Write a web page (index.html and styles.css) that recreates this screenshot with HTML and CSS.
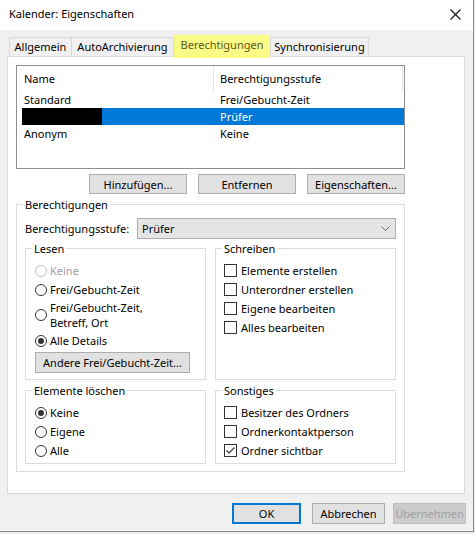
FILE: index.html
```html
<!DOCTYPE html>
<html lang="de">
<head>
    <meta charset="UTF-8">
    <meta name="viewport" content="width=device-width, initial-scale=1.0">
    <title>Kalender: Eigenschaften</title>
    <link rel="stylesheet" href="styles.css">
</head>
<body>
<div class="window">
    <div class="titlebar">
        <span class="title">Kalender: Eigenschaften</span>
        <svg class="close" width="11" height="11" viewBox="0 0 11 11"><path d="M0.5 0.5L10.5 10.5M10.5 0.5L0.5 10.5" stroke="#111" stroke-width="1.1" fill="none"/></svg>
    </div>

    <div class="dialog">
        <div class="tabs">
            <div class="tab tab-general">Allgemein</div>
            <div class="tab tab-archive">AutoArchivierung</div>
            <div class="tab tab-active">Berechtigungen</div>
            <div class="tab tab-sync">Synchronisierung</div>
        </div>

        <div class="panel">
            <!-- Liste der Benutzer -->
            <div class="list">
                <div class="list-head">
                    <div class="col-name">Name</div>
                    <div class="col-level">Berechtigungsstufe</div>
                </div>
                <div class="list-row">
                    <div class="cell-name">Standard</div>
                    <div class="cell-level">Frei/Gebucht-Zeit</div>
                </div>
                <div class="list-row selected">
                    <div class="cell-name"><span class="redacted"></span></div>
                    <div class="cell-level">Prüfer</div>
                </div>
                <div class="list-row">
                    <div class="cell-name">Anonym</div>
                    <div class="cell-level">Keine</div>
                </div>
            </div>

            <div class="list-buttons">
                <button class="btn btn-list">Hinzufügen...</button>
                <button class="btn btn-list">Entfernen</button>
                <button class="btn btn-list">Eigenschaften...</button>
            </div>

            <fieldset class="perm-group">
                <legend>Berechtigungen</legend>
                <div class="perm-body">
                    <div class="level-row">
                        <span class="level-label">Berechtigungsstufe:</span>
                        <div class="combo">
                            <span>Prüfer</span>
                            <svg width="9" height="5" viewBox="0 0 9 5"><path d="M0.5 0.5L4.5 4.5L8.5 0.5" stroke="#666" fill="none"/></svg>
                        </div>
                    </div>

                    <div class="groups">
                        <fieldset class="sub">
                            <legend>Lesen</legend>
                            <div class="sub-body">
                                <div class="opt disabled"><span class="radio"></span>Keine</div>
                                <div class="opt"><span class="radio"></span>Frei/Gebucht-Zeit</div>
                                <div class="opt opt-tall"><span class="radio"></span><span>Frei/Gebucht-Zeit,<br>Betreff, Ort</span></div>
                                <div class="opt"><span class="radio on"></span>Alle Details</div>
                                <button class="btn btn-other">Andere Frei/Gebucht-Zeit...</button>
                            </div>
                        </fieldset>

                        <fieldset class="sub">
                            <legend>Schreiben</legend>
                            <div class="sub-body">
                                <div class="opt"><span class="check"></span>Elemente erstellen</div>
                                <div class="opt"><span class="check"></span>Unterordner erstellen</div>
                                <div class="opt"><span class="check"></span>Eigene bearbeiten</div>
                                <div class="opt"><span class="check"></span>Alles bearbeiten</div>
                            </div>
                        </fieldset>

                        <fieldset class="sub">
                            <legend>Elemente löschen</legend>
                            <div class="sub-body short">
                                <div class="opt"><span class="radio on"></span>Keine</div>
                                <div class="opt"><span class="radio"></span>Eigene</div>
                                <div class="opt"><span class="radio"></span>Alle</div>
                            </div>
                        </fieldset>

                        <fieldset class="sub">
                            <legend>Sonstiges</legend>
                            <div class="sub-body short">
                                <div class="opt"><span class="check"></span>Besitzer des Ordners</div>
                                <div class="opt"><span class="check"></span>Ordnerkontaktperson</div>
                                <div class="opt"><span class="check"><svg width="11" height="11" viewBox="0 0 11 11"><path d="M1.5 5.5L4 8L9.5 2.5" stroke="#333" stroke-width="1.1" fill="none"/></svg></span>Ordner sichtbar</div>
                            </div>
                        </fieldset>
                    </div>
                </div>
            </fieldset>
        </div>

        <div class="dialog-buttons">
            <button class="btn btn-ok">OK</button>
            <button class="btn btn-cancel">Abbrechen</button>
            <button class="btn btn-apply" disabled>Übernehmen</button>
        </div>
    </div>
</div>
</body>
</html>
```

FILE: styles.css
```css
* {
    box-sizing: border-box;
}
html {
    background: #ececec;
}
body {
    margin: 0;
    font-family: "Noto Sans", "DejaVu Sans", sans-serif;
    font-size: 11px;
    color: #000;
}
.window {
    width: 474px;
    height: 532px;
    background: #f0f0f0;
    border-right: 1px solid #8a8a8a;
    border-bottom: 1px solid #8a8a8a;
}
.titlebar {
    height: 30px;
    background: #fff;
    display: flex;
    align-items: center;
    justify-content: space-between;
    padding: 0 12px 0 9px;
}
.title {
    line-height: 16px;
    margin-top: -2px;
}
.close {
    margin-top: -2px;
}

/* Dialog */
.dialog {
    padding: 5px 7px 0 7px;
}
.tabs {
    display: flex;
    align-items: flex-end;
    height: 21px;
    padding-left: 2px;
}
.tab {
    height: 19px;
    line-height: 18px;
    text-align: center;
    background: #f0f0f0;
    border: 1px solid #d9d9d9;
    border-bottom: none;
    white-space: nowrap;
}
.tab-general {
    width: 62px;
    border-right: none;
}
.tab-archive {
    width: 103px;
}
.tab-active {
    position: relative;
    z-index: 1;
    width: 96px;
    height: 23px;
    margin-bottom: -2px;
    line-height: 19px;
    background: #fbfb88;
    border: none;
    color: #5a5a18;
    padding-bottom: 3px;
}
.tab-sync {
    width: 99px;
}
.panel {
    width: 458px;
    height: 438px;
    background: #fff;
    border: 1px solid #d9d9d9;
    padding: 8px 0 0 8px;
}

/* Liste */
.list {
    width: 389px;
    height: 104px;
    border: 1px solid #8f8f8f;
    background: #fff;
}
.list-head {
    display: flex;
    height: 25px;
    line-height: 25px;
}
.col-name {
    width: 197px;
    padding-left: 7px;
    border-right: 1px solid #e5e5e5;
}
.col-level {
    width: 189px;
    padding-left: 6px;
    border-right: 1px solid #e5e5e5;
}
.list-row {
    display: flex;
    width: 382px;
    height: 17px;
    line-height: 17px;
    margin-left: 5px;
}
.list-row.selected {
    background: #0078d7;
    color: #fff;
}
.cell-name {
    width: 198px;
    padding-left: 2px;
}
.redacted {
    display: block;
    width: 80px;
    height: 17px;
    margin-left: -2px;
    background: #000;
}

/* Buttons */
.btn {
    font-family: inherit;
    font-size: 11px;
    color: #000;
    background: #e1e1e1;
    border: 1px solid #adadad;
    padding: 0;
    margin: 0;
    white-space: nowrap;
}
.list-buttons {
    display: flex;
    justify-content: flex-end;
    gap: 11px;
    width: 389px;
    margin-top: 5px;
}
.btn-list {
    width: 98px;
    height: 20px;
}

/* Gruppen */
fieldset {
    margin: 0;
    padding: 0;
    border: 1px solid #dcdcdc;
    min-width: 0;
}
legend {
    margin-left: 6px;
    padding: 0 2px;
    line-height: 15px;
}
.perm-group {
    width: 389px;
    margin-top: 3px;
}
.perm-body {
    padding: 6px 8px 7px 8px;
}
.level-row {
    display: flex;
    align-items: center;
    height: 21px;
}
.level-label {
    width: 112px;
}
.combo {
    flex: 1;
    height: 21px;
    display: flex;
    align-items: center;
    justify-content: space-between;
    padding: 0 5px 0 4px;
    background: #e5e5e5;
    border: 1px solid #adadad;
}
.groups {
    display: grid;
    grid-template-columns: 181px 181px;
    column-gap: 9px;
    row-gap: 3px;
    margin-top: 2px;
}
.sub-body {
    padding: 5px 8px 6px 8px;
}
.sub-body.short {
    padding-bottom: 3px;
}
.opt {
    display: flex;
    align-items: center;
    height: 19px;
    white-space: nowrap;
}
.opt-tall {
    height: 32px;
    line-height: 15px;
}
.opt.disabled {
    color: #a0a0a0;
}
.radio {
    flex: none;
    width: 12px;
    height: 12px;
    margin: 0 3px 0 1px;
    border: 1px solid #333;
    border-radius: 50%;
    background: #fff;
    display: flex;
    align-items: center;
    justify-content: center;
}
.disabled .radio {
    border-color: #c4c4c4;
}
.radio.on::after {
    content: "";
    width: 6px;
    height: 6px;
    border-radius: 50%;
    background: #333;
}
.check {
    flex: none;
    width: 13px;
    height: 13px;
    margin-right: 4px;
    border: 1px solid #333;
    background: #fff;
    display: flex;
}
.btn-other {
    width: 155px;
    height: 21px;
    margin-top: 2px;
    margin-left: 1px;
}

/* Dialogschaltflächen */
.dialog-buttons {
    display: flex;
    justify-content: flex-end;
    margin-top: 9px;
}
.dialog-buttons .btn {
    height: 21px;
}
.btn-ok {
    width: 69px;
    border: 2px solid #0078d7;
}
.btn-cancel {
    width: 73px;
    margin-left: 11px;
}
.btn-apply {
    width: 73px;
    margin-left: 8px;
    background: #cccccc;
    border-color: #bfbfbf;
    color: #a0a0a0;
}
```
